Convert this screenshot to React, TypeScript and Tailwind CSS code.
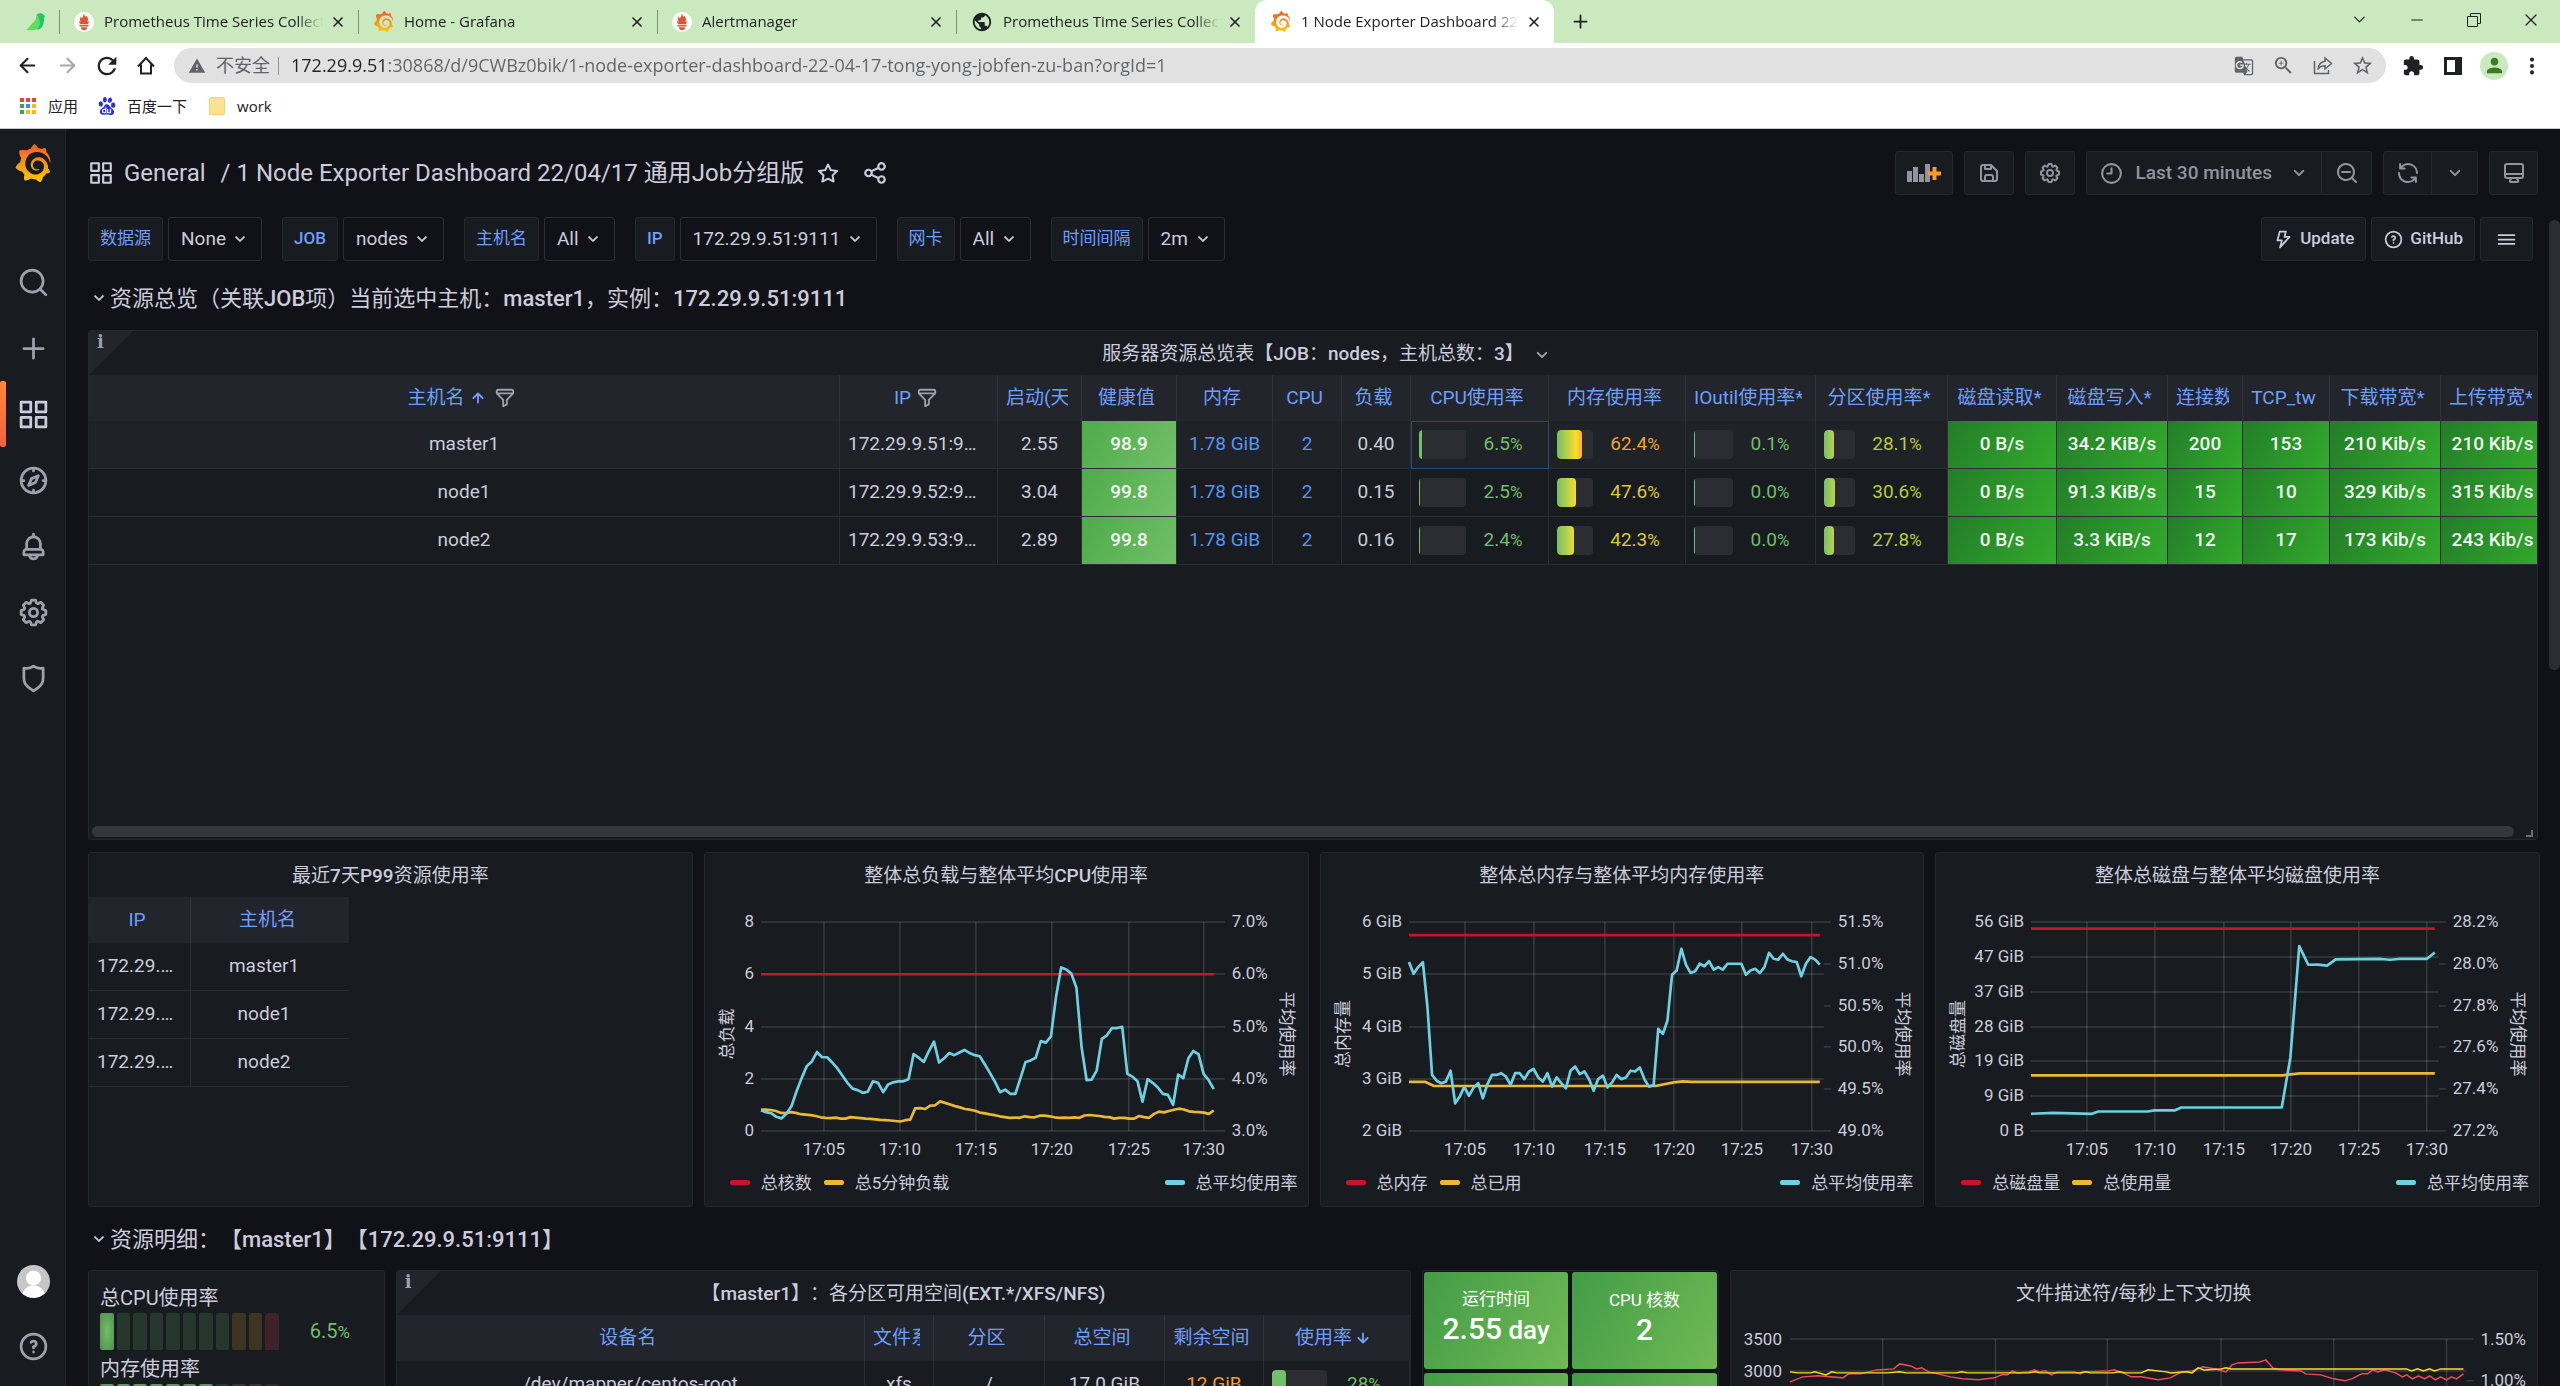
import { ReactNode, useId } from "react";
import clsx from "clsx";
import { SiBaidu, SiGrafana } from "react-icons/si";
import { MdExtension, MdGTranslate, MdPerson, MdPublic, MdRefresh, MdStarOutline, MdWarning, MdZoomIn } from "react-icons/md";
import { ArrowLeft, ArrowRight, ChevronDown, Minus, MoreVertical, Plus, X } from "lucide-react";

const icons = {
  apps: "M10,13H3a1,1,0,0,0-1,1v7a1,1,0,0,0,1,1h7a1,1,0,0,0,1-1V14A1,1,0,0,0,10,13ZM9,20H4V15H9ZM21,2H14a1,1,0,0,0-1,1v7a1,1,0,0,0,1,1h7a1,1,0,0,0,1-1V3A1,1,0,0,0,21,2ZM20,9H15V4h5Zm1,4H14a1,1,0,0,0-1,1v7a1,1,0,0,0,1,1h7a1,1,0,0,0,1-1V14A1,1,0,0,0,21,13Zm-1,7H15V15h5ZM10,2H3A1,1,0,0,0,2,3v7a1,1,0,0,0,1,1h7a1,1,0,0,0,1-1V3A1,1,0,0,0,10,2ZM9,9H4V4H9Z",
  search: "M21.71,20.29,18,16.61A9,9,0,1,0,16.61,18l3.68,3.68a1,1,0,0,0,1.42,0A1,1,0,0,0,21.71,20.29ZM11,18a7,7,0,1,1,7-7A7,7,0,0,1,11,18Z",
  zoomOut: "M21.71,20.29,18,16.61A9,9,0,1,0,16.61,18l3.68,3.68a1,1,0,0,0,1.42,0A1,1,0,0,0,21.71,20.29ZM11,18a7,7,0,1,1,7-7A7,7,0,0,1,11,18Zm4-8H7a1,1,0,0,0,0,2h8a1,1,0,0,0,0-2Z",
  plus: "M19,11H13V5a1,1,0,0,0-2,0v6H5a1,1,0,0,0,0,2h6v6a1,1,0,0,0,2,0V13h6a1,1,0,0,0,0-2Z",
  compass: "M12,2A10,10,0,1,0,22,12,10,10,0,0,0,12,2Zm1,17.93V19a1,1,0,0,0-2,0v.93A8,8,0,0,1,4.07,13H5a1,1,0,0,0,0-2H4.07A8,8,0,0,1,11,4.07V5a1,1,0,0,0,2,0V4.07A8,8,0,0,1,19.93,11H19a1,1,0,0,0,0,2h.93A8,8,0,0,1,13,19.93ZM15.14,7.55l-5,2.12a1,1,0,0,0-.52.52l-2.12,5a1,1,0,0,0,.21,1.1,1,1,0,0,0,.7.3.93.93,0,0,0,.4-.09l5-2.12a1,1,0,0,0,.52-.52l2.12-5a1,1,0,0,0-.21-1.1A1,1,0,0,0,15.14,7.55Zm-2.49,5.1-2.28,1,1-2.28,2.28-1Z",
  bell: "M18,13.18V10a6,6,0,0,0-5-5.91V3a1,1,0,0,0-2,0V4.09A6,6,0,0,0,6,10v3.18A3,3,0,0,0,4,16v2a1,1,0,0,0,1,1H8.14a4,4,0,0,0,7.72,0H19a1,1,0,0,0,1-1V16A3,3,0,0,0,18,13.18ZM8,10a4,4,0,0,1,8,0v3H8Zm4,10a2,2,0,0,1-1.72-1h3.44A2,2,0,0,1,12,20Zm6-3H6V16a1,1,0,0,1,1-1H17a1,1,0,0,1,1,1Z",
  cog: "M21.32,9.55l-1.89-.63.89-1.78A1,1,0,0,0,20.13,6L18,3.87a1,1,0,0,0-1.15-.19l-1.78.89-.63-1.89A1,1,0,0,0,13.5,2h-3a1,1,0,0,0-.95.68L8.92,4.57,7.14,3.68A1,1,0,0,0,6,3.87L3.87,6a1,1,0,0,0-.19,1.15l.89,1.78-1.89.63A1,1,0,0,0,2,10.5v3a1,1,0,0,0,.68.95l1.89.63-.89,1.78A1,1,0,0,0,3.87,18L6,20.13a1,1,0,0,0,1.15.19l1.78-.89.63,1.89a1,1,0,0,0,.95.68h3a1,1,0,0,0,.95-.68l.63-1.89,1.78.89A1,1,0,0,0,18,20.13L20.13,18a1,1,0,0,0,.19-1.15l-.89-1.78,1.89-.63A1,1,0,0,0,22,13.5v-3A1,1,0,0,0,21.32,9.55ZM20,12.78l-1.2.4A2,2,0,0,0,17.64,16l.57,1.14-1.1,1.1L16,17.64a2,2,0,0,0-2.79,1.16l-.4,1.2H11.22l-.4-1.2A2,2,0,0,0,8,17.64l-1.14.57-1.1-1.1L6.36,16A2,2,0,0,0,5.2,13.18L4,12.78V11.22l1.2-.4A2,2,0,0,0,6.36,8L5.79,6.89l1.1-1.1L8,6.36A2,2,0,0,0,10.82,5.2l.4-1.2h1.56l.4,1.2A2,2,0,0,0,16,6.36l1.14-.57,1.1,1.1L17.64,8a2,2,0,0,0,1.16,2.79l1.2.4ZM12,8a4,4,0,1,0,4,4A4,4,0,0,0,12,8Zm0,6a2,2,0,1,1,2-2A2,2,0,0,1,12,14Z",
  shield: "M19.63,3.65a1,1,0,0,0-.84-.2,8,8,0,0,1-6.22-1.27,1,1,0,0,0-1.14,0A8,8,0,0,1,5.21,3.45a1,1,0,0,0-.84.2A1,1,0,0,0,4,4.43v7.45a9,9,0,0,0,3.77,7.33l3.65,2.6a1,1,0,0,0,1.16,0l3.65-2.6A9,9,0,0,0,20,11.88V4.43A1,1,0,0,0,19.63,3.65ZM18,11.88a7,7,0,0,1-2.93,5.7L12,19.77,8.93,17.58A7,7,0,0,1,6,11.88V5.58a10,10,0,0,0,6-1.39,10,10,0,0,0,6,1.39Z",
  help: "M11.29,15.29a1.58,1.58,0,0,0-.12.15.76.76,0,0,0-.09.18.64.64,0,0,0-.06.18,1.36,1.36,0,0,0,0,.2.84.84,0,0,0,.08.38.9.9,0,0,0,.54.54.94.94,0,0,0,.76,0,.9.9,0,0,0,.54-.54A1,1,0,0,0,13,16a1,1,0,0,0-.29-.71A1,1,0,0,0,11.29,15.29ZM12,2A10,10,0,1,0,22,12,10,10,0,0,0,12,2Zm0,18a8,8,0,1,1,8-8A8,8,0,0,1,12,20ZM12,7A3,3,0,0,0,9.4,8.5a1,1,0,1,0,1.73,1A1,1,0,0,1,12,9a1,1,0,0,1,0,2,1,1,0,0,0-1,1v1a1,1,0,0,0,2,0v-.18A3,3,0,0,0,12,7Z",
  star: "M22,9.67A1,1,0,0,0,21.14,9l-5.69-.83L12.9,3a1,1,0,0,0-1.8,0L8.55,8.16,2.86,9a1,1,0,0,0-.81.68,1,1,0,0,0,.25,1l4.13,4-1,5.68A1,1,0,0,0,6.9,21.44L12,18.77l5.1,2.67a.93.93,0,0,0,.46.12,1,1,0,0,0,.59-.19,1,1,0,0,0,.4-1l-1-5.68,4.13-4A1,1,0,0,0,22,9.67Zm-6.15,4a1,1,0,0,0-.29.88l.72,4.2-3.76-2a1.06,1.06,0,0,0-.94,0l-3.76,2,.72-4.2a1,1,0,0,0-.29-.88l-3-3,4.21-.61a1,1,0,0,0,.76-.55L12,5.7l1.88,3.82a1,1,0,0,0,.76.55l4.21.61Z",
  share: "M18,14a4,4,0,0,0-3.08,1.48l-5.1-2.35a3.64,3.64,0,0,0,0-2.26l5.1-2.35A4,4,0,1,0,14,6a4.17,4.17,0,0,0,.07.71L8.79,9.14a4,4,0,1,0,0,5.72l5.28,2.43A4.17,4.17,0,0,0,14,18a4,4,0,1,0,4-4ZM18,4a2,2,0,1,1-2,2A2,2,0,0,1,18,4ZM6,14a2,2,0,1,1,2-2A2,2,0,0,1,6,14Zm12,6a2,2,0,1,1,2-2A2,2,0,0,1,18,20Z",
  save: "M20.71,9.29l-6-6a1,1,0,0,0-.32-.21A1.09,1.09,0,0,0,14,3H6A3,3,0,0,0,3,6V18a3,3,0,0,0,3,3H18a3,3,0,0,0,3-3V10A1,1,0,0,0,20.71,9.29ZM9,5h4V7H9Zm6,14H9V16a1,1,0,0,1,1-1h4a1,1,0,0,1,1,1Zm4-1a1,1,0,0,1-1,1H17V16a3,3,0,0,0-3-3H10a3,3,0,0,0-3,3v3H6a1,1,0,0,1-1-1V6A1,1,0,0,1,6,5H7V8A1,1,0,0,0,8,9h6a1,1,0,0,0,1-1V6.41l4,4Z",
  clock: "M12,2A10,10,0,1,0,22,12,10,10,0,0,0,12,2Zm0,18a8,8,0,1,1,8-8A8,8,0,0,1,12,20ZM12,6a1,1,0,0,0-1,1v4H8a1,1,0,0,0,0,2h4a1,1,0,0,0,1-1V7A1,1,0,0,0,12,6Z",
  sync: "M19.91,15.51H15.38a1,1,0,0,0,0,2h2.4A8,8,0,0,1,4,12a1,1,0,0,0-2,0,10,10,0,0,0,16.88,7.23V21a1,1,0,0,0,2,0V16.5A1,1,0,0,0,19.91,15.51ZM12,2A10,10,0,0,0,5.12,4.77V3a1,1,0,0,0-2,0V7.5a1,1,0,0,0,1,1h4.5a1,1,0,0,0,0-2H6.22A8,8,0,0,1,20,12a1,1,0,0,0,2,0A10,10,0,0,0,12,2Z",
  monitor: "M19,2H5A3,3,0,0,0,2,5V15a3,3,0,0,0,3,3H7.64l-.58,1a2,2,0,0,0,0,2,2,2,0,0,0,1.75,1h6.46A2,2,0,0,0,17,21a2,2,0,0,0,0-2l-.59-1H19a3,3,0,0,0,3-3V5A3,3,0,0,0,19,2ZM8.77,20,10,18H14l1.2,2ZM20,15a1,1,0,0,1-1,1H5a1,1,0,0,1-1-1V14H20Zm0-3H4V5A1,1,0,0,1,5,4H19a1,1,0,0,1,1,1Z",
  angleDown: "M17,9.17a1,1,0,0,0-1.41,0L12,12.71,8.46,9.17a1,1,0,0,0-1.41,0,1,1,0,0,0,0,1.42l4.24,4.24a1,1,0,0,0,1.42,0L17,10.59A1,1,0,0,0,17,9.17Z",
  bolt: "M19.87,8.6A1,1,0,0,0,19,8H14.42l1.27-4.74a1,1,0,0,0-.17-.87A1,1,0,0,0,14.72,2h-7a1,1,0,0,0-1,.74l-2.68,10a1,1,0,0,0,.17.87,1,1,0,0,0,.8.39H8.89L7.08,20.74a1,1,0,0,0,1.71.93L19.7,9.63A1,1,0,0,0,19.87,8.6ZM9.79,17l1.37-3.7a1,1,0,0,0-.17-.87,1,1,0,0,0-.8-.43H6.35L8.49,4h4.93L12.15,8.74a1,1,0,0,0,.17.87,1,1,0,0,0,.8.39h3.64Z",
  bars: "M3,8H21a1,1,0,0,0,0-2H3A1,1,0,0,0,3,8Zm18,8H3a1,1,0,0,0,0,2H21a1,1,0,0,0,0-2Zm0-5H3a1,1,0,0,0,0,2H21a1,1,0,0,0,0-2Z",
  filter: "M19,2H5A3,3,0,0,0,2,5V6.17a3,3,0,0,0,.25,1.2l0,.06a2.81,2.81,0,0,0,.59.86L9,14.41V21a1,1,0,0,0,.47.85A1,1,0,0,0,10,22a1,1,0,0,0,.45-.11l4-2A1,1,0,0,0,15,19V14.41l6.12-6.12a2.81,2.81,0,0,0,.59-.86l0-.06A3,3,0,0,0,22,6.17V5A3,3,0,0,0,19,2ZM13.29,13.29A1,1,0,0,0,13,14v4.38l-2,1V14a1,1,0,0,0-.29-.71L5.41,8H18.59ZM20,6H4V5A1,1,0,0,1,5,4H19a1,1,0,0,1,1,1Z",
  arrowUp: "M17.71,11.29l-5-5a1,1,0,0,0-.33-.21,1,1,0,0,0-.76,0,1,1,0,0,0-.33.21l-5,5a1,1,0,0,0,1.42,1.42L11,9.41V17a1,1,0,0,0,2,0V9.41l3.29,3.3a1,1,0,0,0,1.42,0A1,1,0,0,0,17.71,11.29Z",
};

function Icon({ name, size = 24, className }: { name: keyof typeof icons; size?: number; className?: string }) {
  return (
    <svg viewBox="0 0 24 24" width={size} height={size} fill="currentColor" className={clsx("shrink-0", className)} aria-hidden="true">
      <path d={icons[name]} />
    </svg>
  );
}

function GrafanaLogo({ size }: { size: number }) {
  const id = useId();
  return (
    <span className="inline-flex shrink-0">
      <svg width="0" height="0" className="absolute">
        <linearGradient id={id} x1="0" y1="0" x2="0" y2="1">
          <stop offset="0" stopColor="#f05a28" />
          <stop offset="1" stopColor="#fbca0a" />
        </linearGradient>
      </svg>
      <SiGrafana size={size} fill={`url(#${id})`} />
    </span>
  );
}

function PrometheusLogo() {
  return (
    <svg viewBox="0 0 20 20" width="20" height="20" className="shrink-0">
      <circle cx="10" cy="10" r="10" fill="#fff" />
      <path fill="#e6522c" d="M10 1.500c.7 1.500.4 2.600 1.200 3.600.4-.6.5-1.200.4-1.800C13.200 4.500 14.200 6 14 7.700c-.1.900-.6 1.600-.5 2.400.8-.2 1.300-.6 1.700-1-.2 1.400-.8 2.200-1.300 2.900H6.100c-.6-.8-1.100-1.600-1.300-2.900.5.500 1 .8 1.700.9 0-1-.7-1.700-.6-3 .1-.9.600-1.500.7-2.500.6.500.9 1.100 1 1.900C9.400 4.900 9.200 3 10 1.500ZM5.500 12.800h9v1.700h-9zM6.800 15.300h6.400c-.2 1.800-1.500 3-3.200 3s-3-1.200-3.200-3Z" />
    </svg>
  );
}

// Latin text is medium, Chinese glyphs stay at the regular weight
function Mixed({ text }: { text: string }) {
  const parts = text.split(/([\u3000-\u9fff\uff00-\uffef]+)/).filter(Boolean);
  return (
    <span className="[text-spacing-trim:space-all]">
      {parts.map((p, i) => (/[\u3000-\uffef]/.test(p) ? <span key={i} className="font-normal">{p}</span> : p))}
    </span>
  );
}

/* ---------- browser chrome ---------- */

const tabs = [
  { title: "Prometheus Time Series Collection", icon: <PrometheusLogo /> },
  { title: "Home - Grafana", icon: <GrafanaLogo size={21} /> },
  { title: "Alertmanager", icon: <PrometheusLogo /> },
  { title: "Prometheus Time Series Collection", icon: <MdPublic size={22} className="text-[#202124]" /> },
  { title: "1 Node Exporter Dashboard 22/04/17", icon: <GrafanaLogo size={21} />, active: true },
];

function BrowserChrome() {
  return (
    <header className="shrink-0 border-b border-[#c8c9cc] bg-white font-['Open_Sans','Noto_Sans_CJK_SC',sans-serif] text-[#202124]">
      <div className="flex h-[43px] items-center bg-[#cbe9bf]">
        <div className="flex w-[59px] shrink-0 items-center justify-center pl-3">
          <svg viewBox="0 0 20 20" width="20" height="20">
            <path d="M11 2l4-1 3 2 1 1-1 2c.5 6-2 10-5 11.500L8 17z" fill="#22c46b" />
            <path d="M11 2c1 5-5 9-10.500 16 4 .6 8 .5 11-1.500 3.500-2.500 3-8-.5-14.500z" fill="#5fdf5a" />
          </svg>
        </div>
        <div role="tablist" className="flex h-full min-w-0">
          {tabs.map((tab, i) => (
            <div
              key={i}
              className={clsx(
                "flex w-[299px] min-w-0 items-center pl-[15px] pr-[9px]",
                tab.active ? "rounded-t-[12px] bg-white" : "relative before:absolute before:left-0 before:top-[10px] before:h-[24px] before:w-px before:bg-[#7f9277]"
              )}
            >
              <button type="button" role="tab" aria-selected={!!tab.active} className="flex min-w-0 flex-1 items-center gap-[10px]">
                {tab.icon}
                <span className="flex-1 overflow-hidden whitespace-nowrap text-left text-[15px] [mask-image:linear-gradient(to_right,#000_88%,transparent)]">{tab.title}</span>
              </button>
              <button type="button" aria-label="关闭" className="ml-1 flex size-[22px] items-center justify-center">
                <X size={16} strokeWidth={2.5} />
              </button>
            </div>
          ))}
        </div>
        <button type="button" aria-label="新标签页" className="ml-[14px] flex size-[24px] items-center justify-center"><Plus size={21} /></button>
        <div className="ml-auto flex items-center pb-1">
          <button type="button" aria-label="搜索标签页" className="flex w-[58px] justify-center"><ChevronDown size={19} strokeWidth={1.5} /></button>
          <button type="button" aria-label="最小化" className="flex w-[57px] justify-center"><Minus size={18} strokeWidth={1.5} /></button>
          <button type="button" aria-label="还原" className="flex w-[57px] justify-center">
            <svg viewBox="0 0 14 14" width="14" height="14" fill="none" stroke="currentColor"><path d="M.5 3.500h10v10h-10zM3.500 3V.5h10v10H11" /></svg>
          </button>
          <button type="button" aria-label="关闭窗口" className="flex w-[58px] justify-center"><X size={20} strokeWidth={1.5} /></button>
        </div>
      </div>
      <div className="flex h-[45px] items-center pl-[16px] pr-[17px]">
        <button type="button" aria-label="后退" className="mr-[17px]"><ArrowLeft size={23} strokeWidth={2.2} /></button>
        <button type="button" aria-label="前进" className="mr-[14px] text-[#a6a8ab]"><ArrowRight size={23} strokeWidth={2.2} /></button>
        <button type="button" aria-label="刷新" className="mr-[15px]"><MdRefresh size={28} /></button>
        <button type="button" aria-label="主页" className="mr-[18px]">
          <svg viewBox="0 0 20 20" width="20" height="20" fill="none" stroke="currentColor" strokeWidth="2"><path d="M2 10.500l8-8.500 8 8.500M5 8.500v9h10v-9" /></svg>
        </button>
        <div className="flex h-[35px] min-w-0 flex-1 items-center rounded-full bg-[#e1e1e1] pl-[14px] pr-[12px] text-[#5f6368]">
          <MdWarning size={18} />
          <label htmlFor="address" className="ml-[10px] shrink-0 text-[18px]">不安全</label>
          <span className="mx-[8px] h-[18px] w-px bg-[#8f9194]" />
          <input
            id="address"
            readOnly
            value="172.29.9.51:30868/d/9CWBz0bik/1-node-exporter-dashboard-22-04-17-tong-yong-jobfen-zu-ban?orgId=1"
            className="min-w-0 flex-1 bg-[linear-gradient(to_right,#202124_102px,#5f6368_102px)] bg-clip-text pl-[4px] text-[18px] text-transparent outline-none"
          />
          <div className="flex items-center gap-[18px]">
            <button type="button" aria-label="翻译"><MdGTranslate size={20} /></button>
            <button type="button" aria-label="缩放"><MdZoomIn size={23} /></button>
            <button type="button" aria-label="分享">
              <svg viewBox="0 0 20 20" width="20" height="20" fill="none" stroke="currentColor" strokeWidth="1.500"><path d="M1.500 5v12.500h14V14M12 2l6.500 5.500L12 13V9.800c-3 0-5.500 1-7 3.700 .3-4.500 3-7.500 7-8.200z" /></svg>
            </button>
            <button type="button" aria-label="收藏"><MdStarOutline size={23} /></button>
          </div>
        </div>
        <button type="button" aria-label="扩展程序" className="ml-[16px]"><MdExtension size={22} /></button>
        <button type="button" aria-label="侧边栏" className="ml-[20px] h-[18px] w-[18px] border-[3px] border-r-[7px] border-[#202124]" />
        <button type="button" aria-label="用户" className="ml-[18px] flex size-[28px] items-center justify-center rounded-full bg-[#cbe9bf] text-[#3c7a26]"><MdPerson size={23} /></button>
        <button type="button" aria-label="更多" className="ml-[13px]"><MoreVertical size={22} strokeWidth={2.5} /></button>
      </div>
      <nav className="flex h-[40px] items-start pl-[20px] pt-[7px] text-[15px]">
        <a href="#apps" className="mr-[20px] flex items-center gap-[12px]">
          <span className="grid grid-cols-3 gap-[2px]">
            <i className="size-[4px] bg-[#ea4335]" /><i className="size-[4px] bg-[#ea4335]" /><i className="size-[4px] bg-[#ea4335]" />
            <i className="size-[4px] bg-[#34a853]" /><i className="size-[4px] bg-[#4285f4]" /><i className="size-[4px] bg-[#fbbc04]" />
            <i className="size-[4px] bg-[#34a853]" /><i className="size-[4px] bg-[#fbbc04]" /><i className="size-[4px] bg-[#fbbc04]" />
          </span>
          应用
        </a>
        <a href="#baidu" className="mr-[22px] flex items-center gap-[11px]"><SiBaidu size={18} className="text-[#2932e1]" />百度一下</a>
        <a href="#work" className="flex items-center gap-[12px]"><span className="h-[18px] w-[16px] rounded-[2px] border border-[#f7d467] bg-[#fde293]" />work</a>
      </nav>
    </header>
  );
}

/* ---------- grafana shell ---------- */

function Sidebar() {
  const items: { name: keyof typeof icons; label: string }[] = [
    { name: "search", label: "Search" },
    { name: "plus", label: "Create" },
    { name: "apps", label: "Dashboards" },
    { name: "compass", label: "Explore" },
    { name: "bell", label: "Alerting" },
    { name: "cog", label: "Configuration" },
    { name: "shield", label: "Server Admin" },
  ];
  return (
    <aside className="flex w-[66px] shrink-0 flex-col items-center border-r border-[#202226] bg-[#181b1f] pl-px text-[#9fa0ab]">
      <a href="#home" aria-label="Grafana" className="mt-[15px] mb-[67px] flex"><GrafanaLogo size={38} /></a>
      {items.map((item) => (
        <a
          key={item.name}
          href={"#" + item.name}
          aria-label={item.label}
          className={clsx(
            "relative flex h-[66px] w-full items-center justify-center",
            item.name === "apps" && "text-[#ccccdc] before:absolute before:-left-px before:h-full before:w-[6px] before:rounded-[2px] before:bg-linear-to-b before:from-[#ff8833] before:to-[#f55f3e]"
          )}
        >
          <Icon name={item.name} size={33} />
        </a>
      ))}
      <a href="#profile" aria-label="Profile" className="mt-auto mb-[32px]">
        <svg viewBox="0 0 33 33" width="33" height="33">
          <circle cx="16.500" cy="16.500" r="16.500" fill="#c6c6c6" />
          <circle cx="16.500" cy="13" r="7.500" fill="#fff" />
          <path d="M5.500 28.500c2-5.500 6-8 11-8s9 2.500 11 8a16.500 16.500 0 0 1-22 0z" fill="#fff" />
        </svg>
      </a>
      <a href="#help" aria-label="Help" className="mb-[23px]"><Icon name="help" size={33} /></a>
    </aside>
  );
}

const toolButton = "flex h-[44px] items-center justify-center rounded-[3px] border border-[#25282d] bg-[#181b1f] text-[#9394a0]";

function Toolbar() {
  return (
    <div className="flex items-center text-[#ccccdc]">
      <Icon name="apps" size={26} />
      <h1 className="ml-[10px] flex gap-[15px] text-[24px] leading-[44px]">
        <a href="#general">General</a>
        <a href="#dashboard">/ 1 Node Exporter Dashboard 22/04/17 通用Job分组版</a>
      </h1>
      <button type="button" aria-label="Star" className="ml-[12px]"><Icon name="star" /></button>
      <button type="button" aria-label="Share" className="ml-[22px]"><Icon name="share" size={26} /></button>
      <div className="ml-auto flex gap-[11px]">
        <button type="button" aria-label="Add panel" className={clsx(toolButton, "w-[58px]")}>
          <svg viewBox="0 0 34 20" width="34" height="20" fill="#9394a0">
            <path d="M0 8h5v11H0zM6 4h5v15H6zM12 11h5v8h-5zM18 1h5v18h-5z" />
            <path d="M25.500 4h4v4.500H34v4h-4.500V17h-4v-4.500H21v-4h4.500z" fill="#f99b2a" />
          </svg>
        </button>
        <button type="button" aria-label="Save" className={clsx(toolButton, "w-[50px]")}><Icon name="save" /></button>
        <button type="button" aria-label="Settings" className={clsx(toolButton, "w-[50px]")}><Icon name="cog" /></button>
        <div className="flex">
          <button type="button" className={clsx(toolButton, "rounded-r-none pl-[12px] pr-[10px] text-[19px] font-medium")}>
            <Icon name="clock" size={25} />
            <span className="ml-[12px] mr-[15px]">Last 30 minutes</span>
            <Icon name="angleDown" />
          </button>
          <button type="button" aria-label="Zoom out" className={clsx(toolButton, "w-[50px] rounded-l-none border-l-0")}><Icon name="zoomOut" /></button>
        </div>
        <div className="flex">
          <button type="button" aria-label="Refresh" className={clsx(toolButton, "w-[49px] rounded-r-none")}><Icon name="sync" /></button>
          <button type="button" aria-label="Refresh interval" className={clsx(toolButton, "w-[46px] rounded-l-none border-l-0")}><Icon name="angleDown" /></button>
        </div>
        <button type="button" aria-label="Cycle view" className={clsx(toolButton, "w-[49px]")}><Icon name="monitor" /></button>
      </div>
    </div>
  );
}

const variables = [
  { label: "数据源", value: "None" },
  { label: "JOB", value: "nodes" },
  { label: "主机名", value: "All" },
  { label: "IP", value: "172.29.9.51:9111" },
  { label: "网卡", value: "All" },
  { label: "时间间隔", value: "2m" },
];

function Variables() {
  const link = "flex h-[44px] items-center gap-[6px] rounded-[3px] border border-[#25282d] bg-[#181b1f] px-[11px] text-[17px] font-medium text-[#ccccdc]";
  return (
    <div className="mt-[22px] flex items-center gap-[20px]">
      {variables.map((v, i) => (
        <div key={i} className="flex gap-[5px]">
          <label htmlFor={"var-" + i} className="flex h-[44px] items-center rounded-[3px] border border-[#25282d] bg-[#181b1f] px-[11px] text-[17px] font-medium text-[#6e9fff]">
            <Mixed text={v.label} />
          </label>
          <div className="relative flex h-[44px] items-center rounded-[3px] border border-[#2d2e34] text-[#ccccdc]">
            <select id={"var-" + i} className="h-full appearance-none pl-[12px] pr-[35px] text-[19px] outline-none">
              <option>{v.value}</option>
            </select>
            <Icon name="angleDown" size={22} className="pointer-events-none absolute right-[10px]" />
          </div>
        </div>
      ))}
      <div className="ml-auto mr-[5px] flex gap-[5px]">
        <a href="#update" className={link}><Icon name="bolt" size={21} />Update</a>
        <a href="#github" className={link}><Icon name="help" size={21} />GitHub</a>
        <button type="button" aria-label="Links" className={clsx(link, "w-[53px] justify-center")}><Icon name="bars" size={21} /></button>
      </div>
    </div>
  );
}

function RowTitle({ text }: { text: string }) {
  return (
    <button type="button" className="flex h-[44px] items-center text-[22px] font-medium text-[#ccccdc]">
      <Icon name="angleDown" size={22} />
      <Mixed text={text} />
    </button>
  );
}

function Panel({ title, info, menu, className, children }: { title: string; info?: boolean; menu?: boolean; className?: string; children: ReactNode }) {
  return (
    <section className={clsx("relative flex min-w-0 flex-col overflow-hidden rounded-[3px] border border-[#25272c] bg-[#181b1f]", className)}>
      {info && (
        <div className="absolute left-0 top-0 h-[44px] w-[44px] bg-[#22252b] pl-[8px] font-['DejaVu_Serif'] text-[18px] font-bold leading-[22px] text-[#9fa0ab] [clip-path:polygon(0_0,100%_0,0_100%)]">i</div>
      )}
      <h2 className="flex h-[44px] shrink-0 items-center justify-center pt-[3px] text-[19px] font-medium text-[#ccccdc]">
        <Mixed text={title} />
        {menu && <Icon name="angleDown" size={24} className="ml-[6px] -mr-[30px] text-[#9fa0ab]" />}
      </h2>
      {children}
    </section>
  );
}

/* ---------- tables ---------- */

function Th({ children, last }: { children: ReactNode; last?: boolean }) {
  return (
    <th className={clsx("h-[46px] bg-[#22252b] pl-[8px] pr-[13px] font-normal text-[#6e9fff]", !last && "border-r border-[#2f3238]")}>
      <div className="overflow-hidden whitespace-nowrap text-center">{children}</div>
    </th>
  );
}

const cell = "h-[48px] overflow-hidden text-ellipsis whitespace-nowrap border-b border-r border-[#2a2d32] px-[8px] text-center";

function Percent({ value, color }: { value: string; color: string }) {
  return (
    <span style={{ color }}>
      {value}
      <span className="text-[17px]">%</span>
    </span>
  );
}

function BarCell({ value, color, fill, to, wide, active }: { value: string; color: string; fill: number; to: string; wide?: boolean; active?: boolean }) {
  return (
    <td className={clsx(cell, active && "outline outline-[#2f4775] -outline-offset-1")}>
      <div className="flex items-center">
        <div className="h-[29px] flex-1 overflow-hidden rounded-[4px] bg-[#2b2d32]">
          <div
            className={clsx("h-full", fill > 10 && "rounded-[4px]")}
            style={{ width: fill + "%", minWidth: 1, backgroundImage: `linear-gradient(to right, #73bf69, ${to})` }}
          />
        </div>
        <div className={wide ? "w-[84px]" : "w-[74px]"}><Percent value={value} color={color} /></div>
      </div>
    </td>
  );
}

const hosts = [
  { name: "master1", ip: "172.29.9.51:9111", days: "2.55", health: "98.9", load: "0.40", cpu: "6.5", cpuFill: 7, mem: "62.4", memFill: 70, memColor: "#efa13c", memTo: "#fade2a 75%, #ffb02e", io: "0.1", part: "28.1", partFill: 32, read: "0 B/s", write: "34.2 KiB/s", conn: "200", tw: "153", down: "210 Kib/s", up: "210 Kib/s" },
  { name: "node1", ip: "172.29.9.52:9111", days: "3.04", health: "99.8", load: "0.15", cpu: "2.5", cpuFill: 2, mem: "47.6", memFill: 54, memColor: "#dfc832", memTo: "#f5de2c", io: "0.0", part: "30.6", partFill: 35, read: "0 B/s", write: "91.3 KiB/s", conn: "15", tw: "10", down: "329 Kib/s", up: "315 Kib/s" },
  { name: "node2", ip: "172.29.9.53:9111", days: "2.89", health: "99.8", load: "0.16", cpu: "2.4", cpuFill: 2, mem: "42.3", memFill: 48, memColor: "#dbcb35", memTo: "#e8dc34", io: "0.0", part: "27.8", partFill: 32, read: "0 B/s", write: "3.3 KiB/s", conn: "12", tw: "17", down: "173 Kib/s", up: "243 Kib/s" },
];

function OverviewTable() {
  const green = clsx(cell, "bg-linear-[120deg,#237d28,#33aa2d] bg-clip-padding px-0 font-medium text-white/95");
  return (
    <div className="overflow-hidden">
      <table className="w-[calc(100%+8px)] table-fixed border-separate border-spacing-0 text-[19px] text-[#ccccdc]">
        <colgroup>
          <col />
          <col className="w-[158px]" />
          <col className="w-[84px]" />
          <col className="w-[95px]" />
          <col className="w-[96px]" />
          <col className="w-[69px]" />
          <col className="w-[69px]" />
          <col className="w-[138px]" />
          <col className="w-[137px]" />
          <col className="w-[130px]" />
          <col className="w-[132px]" />
          <col className="w-[109px]" />
          <col className="w-[111px]" />
          <col className="w-[75px]" />
          <col className="w-[87px]" />
          <col className="w-[111px]" />
          <col className="w-[104px]" />
        </colgroup>
        <thead>
          <tr>
            <Th>主机名<Icon name="arrowUp" size={22} className="ml-[2px] inline-block align-[-5px]" /><Icon name="filter" size={22} className="ml-[5px] inline-block align-[-5px] text-[#9fa0ab]" /></Th>
            <Th>IP<Icon name="filter" size={22} className="ml-[5px] inline-block align-[-5px] text-[#9fa0ab]" /></Th>
            <Th>启动(天)</Th>
            <Th>健康值</Th>
            <Th>内存</Th>
            <Th>CPU</Th>
            <Th>负载</Th>
            <Th>CPU使用率</Th>
            <Th>内存使用率</Th>
            <Th>IOutil使用率*</Th>
            <Th>分区使用率*</Th>
            <Th>磁盘读取*</Th>
            <Th>磁盘写入*</Th>
            <Th>连接数</Th>
            <Th>TCP_tw</Th>
            <Th>下载带宽*</Th>
            <Th last>上传带宽*</Th>
          </tr>
        </thead>
        <tbody>
          {hosts.map((h, i) => (
            <tr key={h.name} className={clsx(i === 0 && "bg-[#1f2226]")}>
              <td className={cell}>{h.name}</td>
              <td className={clsx(cell, "pr-[12px]")}>{h.ip}</td>
              <td className={cell}>{h.days}</td>
              <td className={clsx(cell, "bg-linear-[120deg,#4dac49,#73bf69] bg-clip-padding font-medium text-white/95")}>{h.health}</td>
              <td className={clsx(cell, "text-[#5794f2]")}>1.78 GiB</td>
              <td className={clsx(cell, "text-[#5794f2]")}>2</td>
              <td className={cell}>{h.load}</td>
              <BarCell value={h.cpu} color="#73bf69" fill={h.cpuFill} to="#73bf69" active={i === 0} />
              <BarCell value={h.mem} color={h.memColor} fill={h.memFill} to={h.memTo} wide />
              <BarCell value={h.io} color="#73bf69" fill={1} to="#73bf69" />
              <BarCell value={h.part} color="#b9c944" fill={h.partFill} to="#c0d24a" wide />
              <td className={green}>{h.read}</td>
              <td className={green}>{h.write}</td>
              <td className={green}>{h.conn}</td>
              <td className={green}>{h.tw}</td>
              <td className={green}>{h.down}</td>
              <td className={green}>{h.up}</td>
            </tr>
          ))}
        </tbody>
      </table>
    </div>
  );
}

function P99Table() {
  return (
    <table className="w-[260px] table-fixed border-separate border-spacing-0 text-[19px] text-[#ccccdc]">
      <colgroup>
        <col className="w-[102px]" />
        <col />
      </colgroup>
      <thead>
        <tr>
          <Th>IP</Th>
          <Th last>主机名</Th>
        </tr>
      </thead>
      <tbody>
        {hosts.map((h) => (
          <tr key={h.name}>
            <td className={cell}>{h.ip}</td>
            <td className={clsx(cell, "border-r-0 pr-[20px]")}>{h.name}</td>
          </tr>
        ))}
      </tbody>
    </table>
  );
}

function PartitionTable() {
  return (
    <table className="w-full table-fixed border-separate border-spacing-0 text-[19px] text-[#ccccdc]">
      <colgroup>
        <col />
        <col className="w-[69px]" />
        <col className="w-[111px]" />
        <col className="w-[120px]" />
        <col className="w-[99px]" />
        <col className="w-[146px]" />
      </colgroup>
      <thead>
        <tr>
          <Th>设备名</Th>
          <Th>文件系统</Th>
          <Th>分区</Th>
          <Th>总空间</Th>
          <Th>剩余空间</Th>
          <Th last>使用率<Icon name="arrowUp" size={22} className="inline-block rotate-180 align-[-5px]" /></Th>
        </tr>
      </thead>
      <tbody>
        <tr>
          <td className={cell}>/dev/mapper/centos-root</td>
          <td className={cell}>xfs</td>
          <td className={cell}>/</td>
          <td className={cell}>17.0 GiB</td>
          <td className={clsx(cell, "px-0 text-[#ff9830]")}>12 GiB</td>
          <BarCell value="28" color="#73bf69" fill={26} to="#73bf69" />
        </tr>
      </tbody>
    </table>
  );
}

/* ---------- charts ---------- */

type Point = [number, number];

// one sample every 20 seconds, 90 steps over the visible range
const spread = (values: number[]): Point[] => values.map((v, i) => [(i * 90) / (values.length - 1), v]);

interface Series {
  color: string;
  min: number;
  max: number;
  points: Point[];
}

interface ChartProps {
  left: number;
  right: number;
  xTicks: number[];
  leftTicks: string[];
  rightTicks: string[];
  leftTitle: string;
  series: Series[];
  legend: [string, string, string];
}

const TOP = 25;
const BOTTOM = 234;

function Chart({ left, right, xTicks, leftTicks, rightTicks, leftTitle, series, legend }: ChartProps) {
  const tickY = (i: number, n: number) => Math.round(BOTTOM - ((BOTTOM - TOP) * i) / (n - 1));
  return (
    <>
      <svg viewBox="0 0 603 272" className="w-full" fontSize="17" fill="#ccccdc">
        <g stroke="#ffffff" strokeOpacity="0.14" strokeWidth="1.500">
          {leftTicks.map((_, i) => <path key={i} d={`M${left} ${tickY(i, leftTicks.length)}H${right + 4}`} />)}
          {rightTicks.map((_, i) => <path key={i} d={`M${right + 4} ${tickY(i, rightTicks.length)}h7`} />)}
          {xTicks.map((x) => <path key={x} d={`M${x} ${TOP}V${BOTTOM}`} />)}
        </g>
        {series.map((s) => (
          <polyline
            key={s.color}
            fill="none"
            stroke={s.color}
            strokeWidth={2.7}
            strokeLinejoin="round"
            points={s.points
              .map(([t, v]) => `${(left + ((right - left) * t) / 90).toFixed(1)},${(BOTTOM - ((BOTTOM - TOP) * (v - s.min)) / (s.max - s.min)).toFixed(1)}`)
              .join(" ")}
          />
        ))}
        {leftTicks.map((t, i) => <text key={t} x={left - 7} y={tickY(i, leftTicks.length) + 5} textAnchor="end">{t}</text>)}
        {rightTicks.map((t, i) => <text key={t} x={right + 18} y={tickY(i, rightTicks.length) + 5}>{t}</text>)}
        {xTicks.map((x, i) => <text key={x} x={x} y="258" textAnchor="middle">{"17:" + String(5 * (i + 1)).padStart(2, "0")}</text>)}
        <text transform="translate(28 137) rotate(-90)" textAnchor="middle">{leftTitle}</text>
        <text transform="translate(576 137) rotate(90)" textAnchor="middle">平均使用率</text>
      </svg>
      <div className="flex items-center pl-[25px] pr-[10px] text-[17px] leading-[28px] text-[#ccccdc]">
        <i className="mr-[11px] h-[5px] w-[20px] rounded-[2px] bg-[#c4162a]" />{legend[0]}
        <i className="ml-[12px] mr-[11px] h-[5px] w-[20px] rounded-[2px] bg-[#eab839]" />{legend[1]}
        <i className="ml-auto mr-[11px] h-[5px] w-[20px] rounded-[2px] bg-[#6ed0e0]" />{legend[2]}
      </div>
    </>
  );
}

const RED = "#c4162a";
const YELLOW = "#eab839";
const CYAN = "#6ed0e0";

const load5: number[] = [0.81, 0.82, 0.8, 0.76, 0.69, 0.68, 0.72, 0.69, 0.64, 0.62, 0.6, 0.57, 0.52, 0.5, 0.49, 0.51, 0.47, 0.47, 0.53, 0.51, 0.49, 0.47, 0.46, 0.44, 0.42, 0.41, 0.4, 0.38, 0.36, 0.41, 0.43, 0.86, 0.87, 0.84, 0.97, 0.98, 1.13, 1.07, 1.01, 0.95, 0.9, 0.84, 0.81, 0.77, 0.7, 0.67, 0.63, 0.6, 0.56, 0.53, 0.5, 0.51, 0.5, 0.56, 0.53, 0.52, 0.58, 0.58, 0.56, 0.52, 0.5, 0.51, 0.5, 0.52, 0.5, 0.59, 0.61, 0.59, 0.57, 0.54, 0.53, 0.47, 0.5, 0.5, 0.47, 0.47, 0.57, 0.53, 0.5, 0.65, 0.74, 0.71, 0.76, 0.81, 0.85, 0.82, 0.75, 0.73, 0.72, 0.7, 0.65, 0.78];

const cpuUsage: number[] = [3.39, 3.36, 3.34, 3.27, 3.24, 3.33, 3.47, 3.76, 4.01, 4.24, 4.33, 4.51, 4.41, 4.41, 4.31, 4.2, 4.06, 3.92, 3.81, 3.78, 3.73, 3.75, 3.95, 3.92, 3.74, 3.89, 3.93, 3.95, 3.95, 3.99, 4.47, 4.4, 4.32, 4.53, 4.71, 4.31, 4.39, 4.49, 4.45, 4.5, 4.55, 4.49, 4.45, 4.43, 4.27, 4.11, 3.94, 3.74, 3.79, 3.71, 3.71, 4.01, 4.32, 4.35, 4.4, 4.72, 4.69, 4.81, 5.57, 6.13, 6.09, 6.01, 5.74, 4.61, 3.97, 3.98, 4.16, 4.76, 4.83, 4.97, 4.97, 4.99, 4.09, 4.04, 3.95, 3.56, 3.99, 3.92, 3.83, 3.71, 3.69, 3.5, 4.08, 4.01, 4.39, 4.53, 4.47, 4.09, 3.97, 3.8];

const memUsage: number[] = [51.02, 50.88, 50.96, 51.02, 50.48, 49.67, 49.6, 49.57, 49.59, 49.72, 49.33, 49.41, 49.53, 49.42, 49.52, 49.57, 49.39, 49.56, 49.67, 49.67, 49.69, 49.65, 49.55, 49.69, 49.69, 49.62, 49.71, 49.74, 49.64, 49.59, 49.69, 49.53, 49.64, 49.57, 49.51, 49.72, 49.77, 49.68, 49.71, 49.62, 49.48, 49.62, 49.66, 49.52, 49.58, 49.67, 49.62, 49.64, 49.72, 49.71, 49.76, 49.62, 49.53, 49.55, 50.22, 50.16, 50.32, 50.87, 50.92, 51.18, 50.99, 50.89, 50.91, 51, 50.97, 51.03, 50.93, 50.96, 50.93, 51, 51, 51, 51, 50.87, 50.92, 50.94, 50.89, 50.96, 51.13, 51.06, 51.05, 51.12, 51.05, 51.03, 51.02, 50.85, 51, 51.08, 51.05, 50.99];

const charts: (ChartProps & { title: string })[] = [
  {
    title: "整体总负载与整体平均CPU使用率",
    left: 56,
    right: 509,
    xTicks: [119, 195, 271, 347, 424, 499],
    leftTicks: ["0", "2", "4", "6", "8"],
    rightTicks: ["3.0%", "4.0%", "5.0%", "6.0%", "7.0%"],
    leftTitle: "总负载",
    legend: ["总核数", "总5分钟负载", "总平均使用率"],
    series: [
      { color: RED, min: 0, max: 8, points: [[0, 6], [90, 6]] },
      { color: YELLOW, min: 0, max: 8, points: spread(load5) },
      { color: CYAN, min: 3, max: 7, points: spread(cpuUsage) },
    ],
  },
  {
    title: "整体总内存与整体平均内存使用率",
    left: 88,
    right: 499,
    xTicks: [144, 213, 284, 353, 421, 491],
    leftTicks: ["2 GiB", "3 GiB", "4 GiB", "5 GiB", "6 GiB"],
    rightTicks: ["49.0%", "49.5%", "50.0%", "50.5%", "51.0%", "51.5%"],
    leftTitle: "总内存量",
    legend: ["总内存", "总已用", "总平均使用率"],
    series: [
      { color: RED, min: 2, max: 6, points: [[0, 5.75], [90, 5.75]] },
      { color: YELLOW, min: 2, max: 6, points: [[0, 2.94], [3.5, 2.94], [5.5, 2.86], [54, 2.86], [58, 2.93], [60, 2.95], [62, 2.94], [90, 2.94]] },
      { color: CYAN, min: 49, max: 51.5, points: spread(memUsage) },
    ],
  },
  {
    title: "整体总磁盘与整体平均磁盘使用率",
    left: 95,
    right: 499,
    xTicks: [151, 219, 288, 355, 423, 491],
    leftTicks: ["0 B", "9 GiB", "19 GiB", "28 GiB", "37 GiB", "47 GiB", "56 GiB"],
    rightTicks: ["27.2%", "27.4%", "27.6%", "27.8%", "28.0%", "28.2%"],
    leftTitle: "总磁盘量",
    legend: ["总磁盘量", "总使用量", "总平均使用率"],
    series: [
      { color: RED, min: 0, max: 56, points: [[0, 54.2], [90, 54.2]] },
      { color: YELLOW, min: 0, max: 56, points: [[0, 14.9], [56, 14.9], [60, 15.4], [90, 15.4]] },
      { color: CYAN, min: 27.2, max: 28.2, points: [[0, 27.282], [5, 27.286], [13.6, 27.282], [15, 27.293], [26, 27.293], [27.5, 27.298], [32, 27.298], [33.5, 27.312], [55.9, 27.312], [57.8, 27.55], [59.8, 28.084], [61.8, 27.995], [64, 27.996], [66, 27.991], [67.9, 28.021], [78, 28.023], [80, 28.019], [82, 28.023], [88.2, 28.023], [90, 28.054]] },
    ],
  },
];

function SwitchChart() {
  return (
    <svg viewBox="0 0 808 72" className="w-full" fontSize="17" fill="#ccccdc">
      <g stroke="#ffffff" strokeOpacity="0.14" strokeWidth="1.500">
        <path d="M59 24H744M59 56H737M737 66h7" />
        <path d="M152 24V72M265 24V72M377 24V72M491 24V72M604 24V72M717 24V72" />
      </g>
      <polyline
        fill="none"
        stroke="#f2495c"
        strokeWidth="1.500"
        points="59,67 72,62 87,61 112,63 118,59 130,59 146,55 163,54 169,49 180,51 186,54 191,53 198,57 207,59 220,62 232,64 248,65 264,63 271,60 277,60 282,56 287,58 298,57 304,55 309,57 315,56 321,60 327,57 344,57 350,59 355,57 378,56 384,55 395,59 401,62 411,62 428,65 440,63 452,57 462,56 473,52 485,54 496,57 502,50 508,48 530,47 536,45 543,53 550,55 571,56 576,59 591,60 604,64 615,66 622,64 632,59 638,59 643,55 648,57 655,55 666,58 673,62 677,60 683,64 689,61 695,64 700,61 706,65 711,62 717,65 722,62 727,64 734,59"
      />
      <polyline
        fill="none"
        stroke="#fade2a"
        strokeWidth="1.500"
        points="59,57 67,58 80,58 84,57 95,60 101,57 106,58 157,58 169,57 175,58 226,58 231,57 237,58 298,58 305,57 309,58 349,58 355,57 360,58 383,58 389,57 395,58 411,58 418,55 436,57 441,58 456,57 462,58 468,53 474,55 491,54 496,53 501,54 677,54 682,56 688,54 694,56 700,54 705,56 711,54 734,54"
      />
      <text x="51" y="30" textAnchor="end">3500</text>
      <text x="51" y="62" textAnchor="end">3000</text>
      <text x="751" y="30">1.50%</text>
      <text x="751" y="71">1.00%</text>
    </svg>
  );
}

/* ---------- detail row ---------- */

function LedGauge({ label, value, lit }: { label: string; value: string; lit: number }) {
  return (
    <div>
      <div className="text-[20px] leading-[30px] text-[#ccccdc]">{label}</div>
      <div className="flex h-[41px] items-start">
        <div className="flex h-[37px] flex-1 gap-[3px]">
          {Array.from({ length: 11 }, (_, i) => (
            <i
              key={i}
              className={clsx(
                "flex-1 rounded-[2px]",
                i < lit ? "bg-radial from-[#73bf69] to-[#518f4e]" : i < 8 ? "bg-[#26372b]" : i < 10 ? "bg-[#3e3422]" : "bg-[#40222a]"
              )}
            />
          ))}
        </div>
        <div className="w-[105px] pr-[3px] text-center text-[20px] leading-[37px]"><Percent value={value} color="#73bf69" /></div>
      </div>
    </div>
  );
}

function StatTile({ label, value, unit }: { label: string; value: string; unit?: string }) {
  return (
    <div className="flex h-[97px] flex-col items-center justify-center rounded-[3px] bg-linear-[120deg,#439c46,#70b956] pb-[4px] text-white">
      <div className="text-[17px] leading-[22px]">{label}</div>
      <div className="text-[30px] font-medium leading-[38px]">
        {value}
        {unit && <span className="text-[26px]"> {unit}</span>}
      </div>
    </div>
  );
}

export default function App() {
  return (
    <div className="flex h-screen flex-col overflow-hidden bg-[#111217]">
      <BrowserChrome />
      <div className="relative flex min-h-0 flex-1 font-['Roboto','Noto_Sans_CJK_SC',sans-serif]">
        <Sidebar />
        <main className="min-w-0 flex-1 overflow-hidden px-[22px] pt-[22px]">
          <Toolbar />
          <Variables />
          <div className="mt-[15px] mb-[10px]">
            <RowTitle text="资源总览（关联JOB项）当前选中主机：master1，实例：172.29.9.51:9111" />
          </div>
          <Panel title="服务器资源总览表【JOB：nodes，主机总数：3】" info menu className="h-[510px]">
            <OverviewTable />
            <div className="mt-auto mb-[2px] flex items-end">
              <div className="ml-[3px] h-[11px] flex-1 rounded-full bg-[#34373c]" />
              <i className="mx-[4px] ml-[12px] h-[7px] w-[7px] border-b-2 border-r-2 border-[#6b6d72]" />
            </div>
          </Panel>
          <div className="mt-[12px] -mr-[2px] grid grid-cols-4 gap-[11px]">
            <Panel title="最近7天P99资源使用率" className="h-[355px]">
              <P99Table />
            </Panel>
            {charts.map(({ title, ...chart }) => (
              <Panel key={title} title={title} className="h-[355px]">
                <Chart {...chart} />
              </Panel>
            ))}
          </div>
          <div className="mt-[10px] mb-[9px]">
            <RowTitle text="资源明细：【master1】【172.29.9.51:9111】" />
          </div>
          <div className="grid grid-cols-[297fr_1016fr_297fr_809fr] gap-[11px]">
            <section className="h-[355px] rounded-[3px] border border-[#25272c] bg-[#181b1f] pl-[11px] pt-[12px]">
              <LedGauge label="总CPU使用率" value="6.5" lit={1} />
              <LedGauge label="内存使用率" value="62.4" lit={7} />
            </section>
            <Panel title="【master1】：各分区可用空间(EXT.*/XFS/NFS)" info className="h-[355px]">
              <PartitionTable />
            </Panel>
            <section className="grid h-[355px] grid-cols-2 content-start gap-[4px] rounded-[3px] border border-[#25272c] p-[1px]">
              <StatTile label="运行时间" value="2.55" unit="day" />
              <StatTile label="CPU 核数" value="2" />
              <StatTile label="内存总量" value="1.78" unit="GiB" />
              <StatTile label="CPU iowait" value="0.1" unit="%" />
            </section>
            <Panel title="文件描述符/每秒上下文切换" className="h-[355px]">
              <SwitchChart />
            </Panel>
          </div>
        </main>
        <div className="absolute right-0 top-[91px] h-[450px] w-[11px] rounded-full bg-[#2d2e33]" />
      </div>
    </div>
  );
}
